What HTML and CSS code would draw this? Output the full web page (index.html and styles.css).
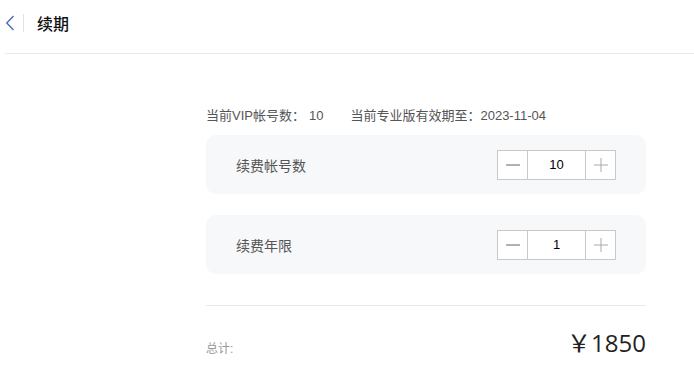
FILE: index.html
```html
<!DOCTYPE html>
<html lang="zh">
<head>
<meta charset="utf-8">
<title>续期</title>
<link rel="stylesheet" href="styles.css">
</head>
<body>
<header class="topbar">
  <span class="back">
    <svg width="10" height="16" viewBox="0 0 10 16"><path d="M8.5 1 L1.8 8 L8.5 15" fill="none" stroke="#4a6db5" stroke-width="1.4"/></svg>
  </span>
  <span class="sep"></span>
  <span class="title">续期</span>
</header>
<main class="content">
  <div class="info">
    <span class="info-item">当前VIP帐号数：<span class="val">10</span></span>
    <span class="info-item">当前专业版有效期至：2023-11-04</span>
  </div>
  <div class="card">
    <span class="label">续费帐号数</span>
    <div class="stepper">
      <span class="btn">
        <svg width="14" height="14" viewBox="0 0 14 14"><path d="M0 7 H14" stroke="#666" stroke-width="1"/></svg>
      </span>
      <span class="num">10</span>
      <span class="btn">
        <svg width="14" height="14" viewBox="0 0 14 14"><path d="M0 7 H14 M7 0 V14" stroke="#aaa" stroke-width="1"/></svg>
      </span>
    </div>
  </div>
  <div class="card">
    <span class="label">续费年限</span>
    <div class="stepper">
      <span class="btn">
        <svg width="14" height="14" viewBox="0 0 14 14"><path d="M0 7 H14" stroke="#666" stroke-width="1"/></svg>
      </span>
      <span class="num">1</span>
      <span class="btn">
        <svg width="14" height="14" viewBox="0 0 14 14"><path d="M0 7 H14 M7 0 V14" stroke="#aaa" stroke-width="1"/></svg>
      </span>
    </div>
  </div>
  <div class="total">
    <span class="total-label">总计:</span>
    <span class="price">￥1850</span>
  </div>
</main>
</body>
</html>
```
FILE: styles.css
```css
* { box-sizing: border-box; }
html, body { margin: 0; padding: 0; background: #fff; }
body {
  font-family: "Liberation Sans", "Noto Sans CJK SC", sans-serif;
  color: #333;
}
.topbar {
  display: flex;
  align-items: center;
  height: 54px;
  margin-left: 5px;
  border-bottom: 1px solid #ebebeb;
  padding-bottom: 8px;
}
.back { display: flex; align-items: center; width: 10px; height: 16px; }
.sep {
  width: 1px;
  height: 18px;
  background: #e3e3e3;
  margin-left: 8px;
  margin-right: 13px;
}
.title { font-size: 16px; font-weight: 500; color: #111; }
.content {
  width: 440px;
  margin-left: 206px;
  padding-top: 51px;
}
.info {
  display: flex;
  gap: 27px;
  font-size: 13px;
  color: #555;
  height: 18px;
  align-items: center;
}
.info .val { margin-left: 4px; }
.card {
  display: flex;
  align-items: center;
  justify-content: space-between;
  height: 59px;
  background: #f7f8fa;
  border-radius: 10px;
  padding: 0 30px;
  margin-top: 21px;
}
.info + .card { margin-top: 12px; }
.label { font-size: 14px; color: #555; }
.stepper {
  display: flex;
  height: 30px;
  border: 1px solid #c8c8c8;
  background: #fff;
}
.btn {
  width: 29px;
  display: flex;
  align-items: center;
  justify-content: center;
}
.num {
  width: 59px;
  border-left: 1px solid #c8c8c8;
  border-right: 1px solid #c8c8c8;
  display: flex;
  align-items: center;
  justify-content: center;
  font-size: 13px;
  color: #000;
}
.total {
  margin-top: 31px;
  border-top: 1px solid #e8e8e8;
  display: flex;
  justify-content: space-between;
  align-items: flex-end;
  padding-top: 22px;
}
.total-label { font-size: 12px; color: #999; margin-bottom: 2px; }
.price {
  font-family: "Open Sans", "Noto Sans CJK SC", sans-serif;
  font-size: 24px;
  color: #222;
  line-height: 30px;
}
```
